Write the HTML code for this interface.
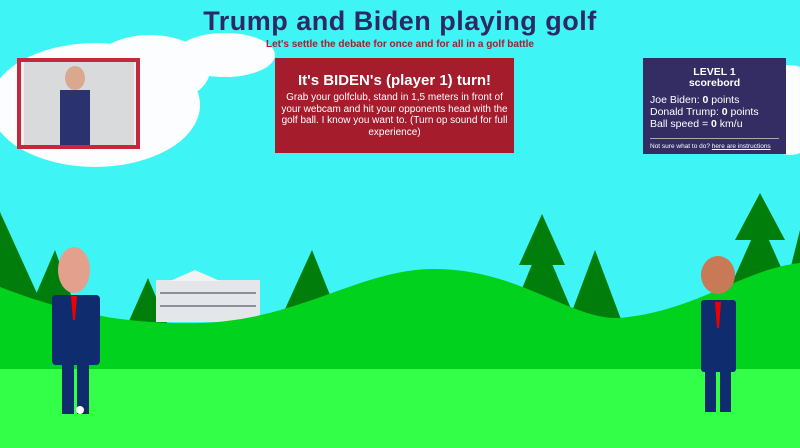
<!DOCTYPE html>
<html><head><style>
body{margin:0;width:800px;height:448px;overflow:hidden;background:#3ef4f4;font-family:"Liberation Sans",sans-serif;position:relative}
.abs{position:absolute}
h1{position:absolute;top:6px;left:0;width:800px;text-align:center;margin:0;font-size:27px;color:#2c2a64;font-weight:bold;letter-spacing:0.5px}
.sub{top:39px;left:0;width:800px;text-align:center;font-size:10px;font-weight:bold;color:#a3202c}
.turn{left:275px;top:58px;width:239px;height:95px;background:#a51c2c;color:#fff;text-align:center}
.turn b{display:block;font-size:15px;margin-top:14px}
.turn p{margin:3px 4px;font-size:10px;line-height:11.5px}
.score{left:643px;top:58px;width:143px;height:96px;background:#332d63;color:#fff;font-size:10.5px}
</style></head><body>
<svg class="abs" style="left:0;top:0" width="800" height="448">
<g fill="#fbfdfe">
<ellipse cx="95" cy="105" rx="105" ry="62"/><ellipse cx="225" cy="55" rx="50" ry="22"/><ellipse cx="150" cy="70" rx="60" ry="35"/>
<ellipse cx="790" cy="110" rx="35" ry="45"/>
</g>
<g fill="#007d0a">
<polygon points="0,212 40,300 -40,300"/><polygon points="0,250 50,340 -50,340"/>
<polygon points="55,250 80,320 25,320"/>
<polygon points="148,278 170,330 125,330"/>
<polygon points="312,250 340,320 280,320"/>
<polygon points="542,214 565,265 519,265"/><polygon points="542,240 580,330 505,330"/>
<polygon points="595,250 625,330 565,330"/>
<polygon points="760,193 785,240 735,240"/><polygon points="760,220 800,310 720,310"/>
<polygon points="800,230 810,290 785,290"/>
</g>
<rect x="156" y="280" width="104" height="42" fill="#e4e6ea"/>
<polygon points="170,281 195,270 220,281" fill="#f2f2f2"/>
<g fill="#8a8f98"><rect x="160" y="292" width="96" height="2"/><rect x="160" y="305" width="96" height="2"/></g>
<path d="M0,287 C60,310 120,325 200,323 C300,320 360,269 434,269 C520,269 570,320 620,318 C700,310 740,270 800,263 L800,370 L0,370Z" fill="#00d21e"/>
<rect x="0" y="369" width="800" height="79" fill="#33ff48"/>
<g>
<ellipse cx="74" cy="270" rx="16" ry="23" fill="#e3a08c"/>
<rect x="52" y="295" width="48" height="70" rx="4" fill="#0f2d6e"/>
<polygon points="71,296 77,296 75,320 73,320" fill="#e00"/>
<rect x="62" y="364" width="12" height="50" fill="#0f2d6e"/><rect x="77" y="364" width="12" height="50" fill="#0f2d6e"/>
<circle cx="80" cy="410" r="4" fill="#fff"/>
<ellipse cx="718" cy="275" rx="17" ry="19" fill="#c77a55"/>
<rect x="701" y="300" width="35" height="72" rx="3" fill="#0f2d6e"/>
<polygon points="715,302 721,302 719,328 717,328" fill="#e00"/>
<rect x="705" y="370" width="11" height="42" fill="#0f2d6e"/><rect x="720" y="370" width="11" height="42" fill="#0f2d6e"/>
</g>
<rect x="17" y="58" width="123" height="91" fill="#c4283a"/>
<rect x="21" y="62" width="115" height="83" fill="#f0f0f0"/>
<rect x="24" y="62" width="110" height="83" fill="#d8dadc"/>
<rect x="60" y="90" width="30" height="55" fill="#2a3370"/><ellipse cx="75" cy="78" rx="10" ry="12" fill="#d9a88e"/>
</svg>
<h1>Trump and Biden playing golf</h1>
<div class="abs sub">Let's settle the debate for once and for all in a golf battle</div>
<div class="abs turn"><b>It's BIDEN's (player 1) turn!</b><p>Grab your golfclub, stand in 1,5 meters in front of your webcam and hit your opponents head with the golf ball. I know you want to. (Turn op sound for full experience)</p></div>
<div class="abs score">
<div style="text-align:center;font-weight:bold;margin-top:9px;line-height:11px">LEVEL 1<br>scorebord</div>
<div style="margin:5px 0 0 7px;line-height:12px">Joe Biden: <b>0</b> points<br>Donald Trump: <b>0</b> points<br>Ball speed = <b>0</b> km/u</div>
<div style="border-top:1px solid #aaa;margin:8px 7px 4px"></div>
<div style="font-size:6.5px;margin-left:7px">Not sure what to do? <u>here are instructions</u></div>
</div>
</body></html>
